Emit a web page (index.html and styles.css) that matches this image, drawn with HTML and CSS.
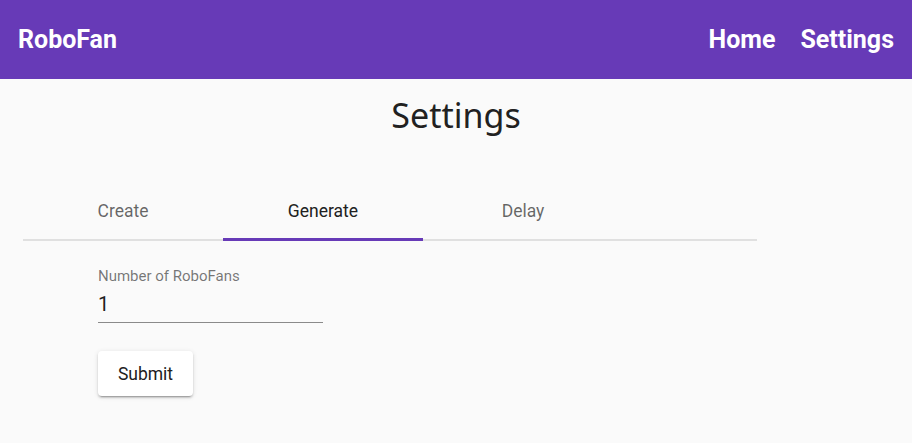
FILE: index.html
```html
<!DOCTYPE html>
<html>
<head>
<meta charset="utf-8">
<link rel="stylesheet" href="styles.css">
</head>
<body>
<header class="appbar">
  <div class="brand">RoboFan</div>
  <nav class="nav">
    <a class="nav-link">Home</a>
    <a class="nav-link">Settings</a>
  </nav>
</header>
<main class="content">
  <h1 class="title">Settings</h1>
  <div class="tabs">
    <div class="tab">Create</div>
    <div class="tab active">Generate</div>
    <div class="tab">Delay</div>
  </div>
  <form class="form">
    <label class="field">
      <span class="field-label">Number of RoboFans</span>
      <span class="field-input">1</span>
    </label>
    <button type="button" class="btn">Submit</button>
  </form>
</main>
</body>
</html>
```
FILE: styles.css
```css
* { box-sizing: border-box; }
html, body { margin: 0; padding: 0; }
body {
  background: #fafafa;
  font-family: Roboto, "Liberation Sans", sans-serif;
  color: #212121;
  width: 912px;
  height: 443px;
  overflow: hidden;
}
.appbar {
  height: 79px;
  background: #673ab7;
  color: #fff;
  display: flex;
  align-items: center;
  justify-content: space-between;
  padding: 0 18px;
}
.brand {
  font-size: 25px;
  font-weight: 700;
}
.nav {
  display: flex;
  gap: 25px;
}
.nav-link {
  font-size: 25px;
  font-weight: 700;
}
.content {
  display: flex;
  flex-direction: column;
}
.title {
  margin: 14px 0 0;
  text-align: center;
  font-family: "Noto Sans", sans-serif;
  font-weight: 400;
  font-size: 34px;
  line-height: 44px;
}
.tabs {
  margin: 46px 0 0 23px;
  width: 734px;
  display: flex;
  border-bottom: 2px solid #e0e0e0;
}
.tab {
  width: 200px;
  height: 58px;
  display: flex;
  align-items: center;
  justify-content: center;
  font-size: 17.5px;
  color: rgba(0,0,0,0.6);
  border-bottom: 3px solid transparent;
  margin-bottom: -2px;
}
.tab.active {
  color: #212121;
  border-bottom-color: #673ab7;
}
.form {
  padding: 26px 0 0 98px;
  display: flex;
  flex-direction: column;
  align-items: flex-start;
}
.field {
  display: flex;
  flex-direction: column;
  width: 225px;
  border-bottom: 1px solid #8a8a8a;
}
.field-label {
  font-size: 15px;
  color: rgba(0,0,0,0.54);
  line-height: 18px;
}
.field-input {
  font-size: 20px;
  line-height: 26px;
  margin-top: 6px;
  padding-bottom: 5px;
  color: #212121;
}
.btn {
  margin-top: 28px;
  width: 95px;
  height: 45px;
  background: #fff;
  border: none;
  border-radius: 4px;
  box-shadow: 0 3px 1px -2px rgba(0,0,0,0.2), 0 2px 2px 0 rgba(0,0,0,0.14), 0 1px 5px 0 rgba(0,0,0,0.12);
  font-family: Roboto, sans-serif;
  font-size: 17.5px;
  color: #212121;
  padding: 0;
}
```
